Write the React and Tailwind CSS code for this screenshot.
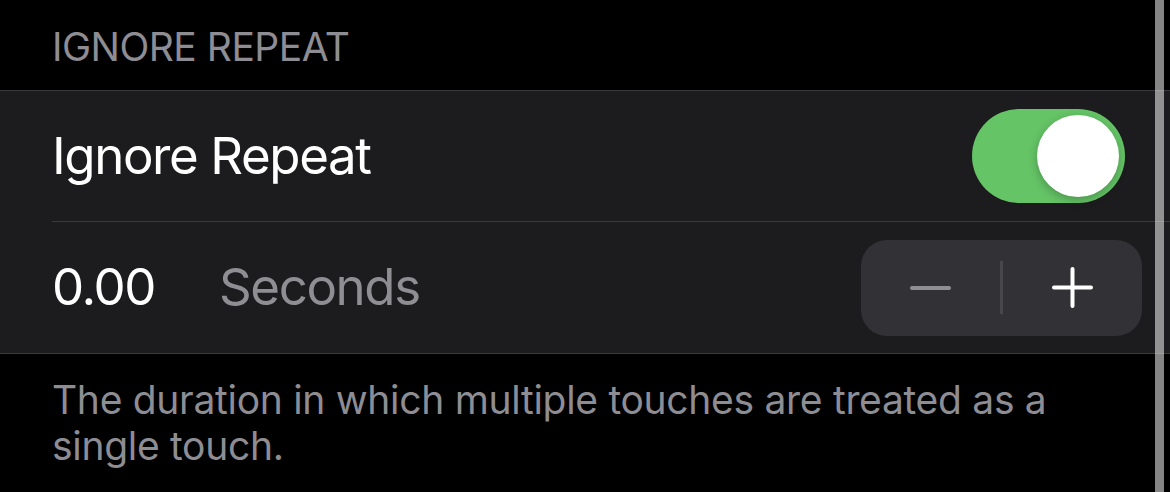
import React, { useState } from "react";

const font = { fontFamily: "Inter, 'Noto Sans', sans-serif" };

const Toggle = ({ on, onChange }) => (
  <button
    onClick={() => onChange(!on)}
    className={`relative w-[153px] h-[94px] rounded-full ${on ? "bg-[#65c466]" : "bg-[#39393d]"}`}
  >
    <span
      className={`absolute top-[6px] w-[82px] h-[82px] rounded-full bg-white shadow-[0_3px_10px_rgba(0,0,0,0.25)] ${
        on ? "left-[65px]" : "left-[6px]"
      }`}
    />
  </button>
);

const Stepper = ({ value, setValue }) => (
  <div className="flex items-center w-[281px] h-[96px] rounded-[26px] bg-[#323236]">
    <button
      onClick={() => setValue((v) => Math.max(0, v - 0.01))}
      className="flex-1 h-full flex items-center justify-center"
    >
      <span className={`block w-[41px] h-[4px] rounded-full ${value <= 0 ? "bg-[#8e8e93]" : "bg-white"}`} />
    </button>
    <span className="block w-[3px] h-[53px] bg-[#48484c]" />
    <button
      onClick={() => setValue((v) => v + 0.01)}
      className="flex-1 h-full flex items-center justify-center"
    >
      <svg width="41" height="41" viewBox="0 0 41 41">
        <path d="M20.5 2v37M2 20.5h37" stroke="#fff" strokeWidth="4" strokeLinecap="round" />
      </svg>
    </button>
  </div>
);

export default function App() {
  const [on, setOn] = useState(true);
  const [value, setValue] = useState(0);

  return (
    <div className="relative w-[1170px] h-[492px] bg-black overflow-hidden" style={font}>
      <div className="pt-[23px] pb-[20px] pl-[52px] text-[39px] leading-[47px] text-[#8d8d93] tracking-[-0.5px]">
        IGNORE REPEAT
      </div>

      <div className="bg-[#1c1c1e] border-y border-[#3a3a3c]">
        <div className="flex items-center justify-between h-[130px] pl-[52px] pr-[45px]">
          <span className="text-[51px] text-white tracking-[-1.4px]">Ignore Repeat</span>
          <Toggle on={on} onChange={setOn} />
        </div>
        <div className="ml-[52px] h-px bg-[#3a3a3c]" />
        <div className="flex items-center justify-between h-[131px] pl-[52px] pr-[28px]">
          <div className="flex items-center text-[51px] tracking-[-1.4px]">
            <span className="text-white w-[167px]">{value.toFixed(2)}</span>
            <span className="text-[#8e8e93]">Seconds</span>
          </div>
          <Stepper value={value} setValue={setValue} />
        </div>
      </div>

      <p className="pt-[23px] pl-[52px] pr-[100px] text-[39px] leading-[46px] text-[#8d8d93] tracking-[-0.3px]">
        The duration in which multiple touches are treated as a single touch.
      </p>

      <div className="absolute top-0 right-[6px] w-[9px] h-full bg-[rgba(255,255,255,0.52)]" />
    </div>
  );
}
